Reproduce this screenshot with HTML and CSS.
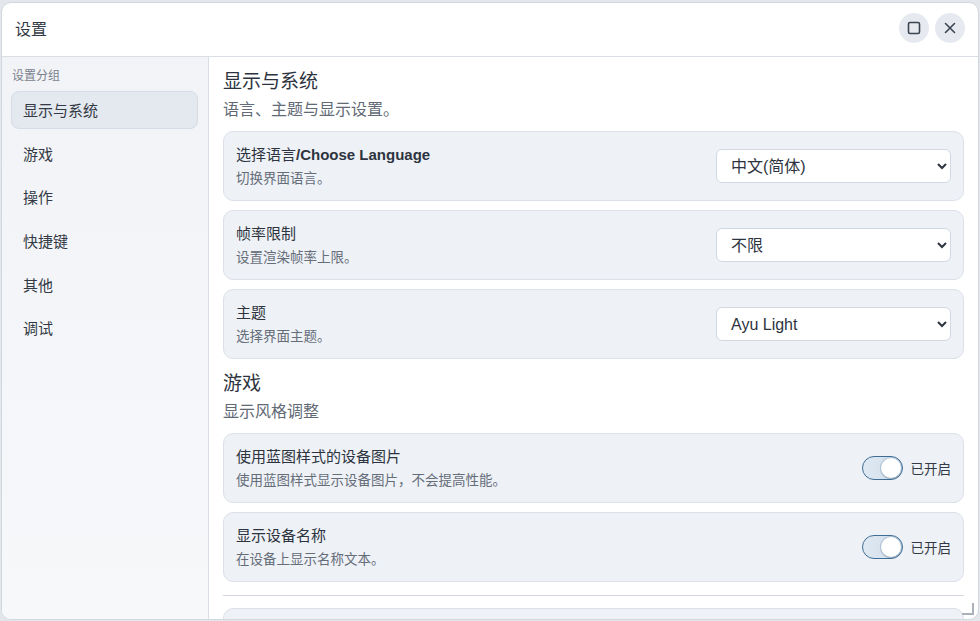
FILE: index.html
```html
<!DOCTYPE html>
<html lang="zh-CN">
<head>
    <meta charset="UTF-8">
    <title>设置</title>
    <link rel="stylesheet" href="styles.css">
</head>
<body>
    <div class="dialog">
        <header class="dialog-header">
            <h1 class="dialog-title">设置</h1>
            <div class="header-actions">
                <button class="round-btn" title="最大化">
                    <svg width="16" height="16" viewBox="0 0 16 16"><rect x="2.5" y="2.5" width="11" height="11" rx="1.5" fill="none" stroke="#3c4452" stroke-width="1.6"/></svg>
                </button>
                <button class="round-btn" title="关闭">
                    <svg width="16" height="16" viewBox="0 0 16 16"><path d="M3.5 3.5l9 9M12.5 3.5l-9 9" stroke="#3c4452" stroke-width="1.6" stroke-linecap="round"/></svg>
                </button>
            </div>
        </header>

        <div class="dialog-body">
            <aside class="sidebar">
                <div class="sidebar-label">设置分组</div>
                <ul class="nav-list">
                    <li class="nav-item active">显示与系统</li>
                    <li class="nav-item">游戏</li>
                    <li class="nav-item">操作</li>
                    <li class="nav-item">快捷键</li>
                    <li class="nav-item">其他</li>
                    <li class="nav-item">调试</li>
                </ul>
            </aside>

            <main class="content">
                <section class="group">
                    <h2 class="group-title">显示与系统</h2>
                    <p class="group-desc">语言、主题与显示设置。</p>

                    <div class="setting-card">
                        <div class="setting-text">
                            <div class="setting-name">选择语言<b>/Choose Language</b></div>
                            <div class="setting-hint">切换界面语言。</div>
                        </div>
                        <select class="setting-select">
                            <option>中文(简体)</option>
                            <option>English</option>
                        </select>
                    </div>

                    <div class="setting-card">
                        <div class="setting-text">
                            <div class="setting-name">帧率限制</div>
                            <div class="setting-hint">设置渲染帧率上限。</div>
                        </div>
                        <select class="setting-select">
                            <option>不限</option>
                            <option>60</option>
                        </select>
                    </div>

                    <div class="setting-card">
                        <div class="setting-text">
                            <div class="setting-name">主题</div>
                            <div class="setting-hint">选择界面主题。</div>
                        </div>
                        <select class="setting-select">
                            <option>Ayu Light</option>
                            <option>Ayu Dark</option>
                        </select>
                    </div>
                </section>

                <section class="group">
                    <h2 class="group-title">游戏</h2>
                    <p class="group-desc">显示风格调整</p>

                    <div class="setting-card">
                        <div class="setting-text">
                            <div class="setting-name">使用蓝图样式的设备图片</div>
                            <div class="setting-hint">使用蓝图样式显示设备图片，不会提高性能。</div>
                        </div>
                        <label class="toggle">
                            <span class="toggle-track on"><span class="toggle-knob"></span></span>
                            <span class="toggle-label">已开启</span>
                        </label>
                    </div>

                    <div class="setting-card">
                        <div class="setting-text">
                            <div class="setting-name">显示设备名称</div>
                            <div class="setting-hint">在设备上显示名称文本。</div>
                        </div>
                        <label class="toggle">
                            <span class="toggle-track on"><span class="toggle-knob"></span></span>
                            <span class="toggle-label">已开启</span>
                        </label>
                    </div>
                </section>

                <hr class="divider">

                <div class="setting-card">
                    <div class="setting-text">
                        <div class="setting-name">&nbsp;</div>
                        <div class="setting-hint">&nbsp;</div>
                    </div>
                </div>
            </main>
        </div>
        <span class="resize-grip"></span>
    </div>
</body>
</html>
```

FILE: styles.css
```css
/* Ventana de ajustes */
html, body { height: 100%; }
body { margin: 0; background-color: #e3e6eb; font-family: "Liberation Sans", "Noto Sans CJK SC", sans-serif; color: #2d3440; overflow: hidden; }
.dialog { position: relative; box-sizing: border-box; height: calc(100vh - 3px); margin: 2px 1px 1px 1px; background-color: #fff; border: 1px solid #d3d8e0; border-radius: 10px; display: flex; flex-direction: column; overflow: hidden; }

.dialog-header { height: 54px; box-sizing: border-box; flex-shrink: 0; display: flex; align-items: center; justify-content: space-between; padding: 0 13px 3px 13px; border-bottom: 1px solid #d9dde4; }
.dialog-title { margin: 0; font-size: 16px; font-weight: normal; color: #333a45; }
.header-actions { display: flex; gap: 6px; }
.round-btn { width: 30px; height: 30px; border-radius: 50%; border: none; background-color: #e6e9ef; display: flex; align-items: center; justify-content: center; padding: 0; cursor: pointer; }

.dialog-body { flex-grow: 1; display: flex; overflow: hidden; }

.sidebar { width: 207px; flex-shrink: 0; box-sizing: border-box; padding: 12px 10px 0 9px; border-right: 1px solid #d9dde4; background: linear-gradient(180deg, #f1f3f7 0%, #f7f8fa 100%); }
.sidebar-label { font-size: 12px; line-height: 14px; color: #7a818c; margin-bottom: 8px; padding-left: 1px; }
.nav-list { list-style: none; margin: 0; padding: 0; display: flex; flex-direction: column; gap: 6px; }
.nav-item { height: 37.6px; box-sizing: border-box; display: flex; align-items: center; padding-left: 11px; font-size: 15px; color: #333a45; border: 1px solid transparent; border-radius: 8px; cursor: pointer; }
.nav-item.active { background-color: #e4e8ef; border-color: #d6dce5; }

.content { flex-grow: 1; padding: 12px 14px 0 14px; overflow: hidden; }
.group-title { margin: 0; font-size: 19px; line-height: 26px; font-weight: normal; color: #2d3440; }
.group-desc { margin: 4px 0 10px 0; font-size: 16px; line-height: 22px; color: #626a76; }
.group + .group { margin-top: 12px; }

.setting-card { box-sizing: border-box; min-height: 70px; display: flex; align-items: center; justify-content: space-between; padding: 0 12px; background-color: #eef1f6; border: 1px solid #dce1e9; border-radius: 10px; margin-bottom: 9px; }
.setting-name { font-size: 15px; line-height: 20px; color: #2d3440; }
.setting-name b { font-weight: bold; }
.setting-hint { font-size: 13.5px; line-height: 19px; margin-top: 4px; color: #656d79; }

.setting-select { width: 235px; height: 34px; box-sizing: border-box; padding: 0 8px 0 10px; font-family: inherit; font-size: 16px; color: #2d3440; background-color: #fff; border: 1px solid #d2d8e1; border-radius: 6px; }

.toggle { display: flex; align-items: center; gap: 8px; cursor: pointer; }
.toggle-track { width: 41px; height: 24px; box-sizing: border-box; border-radius: 12px; border: 1px solid #9aa6b4; background-color: #e8ecf1; display: flex; align-items: center; padding: 1px; }
.toggle-track.on { border-color: #3e6e96; background: linear-gradient(90deg, #e0e9f2 0%, #cddceb 100%); justify-content: flex-end; }
.toggle-knob { width: 20px; height: 20px; border-radius: 50%; background-color: #fff; box-shadow: 0 0 0 1px rgba(90,130,170,0.25), 0 1px 2px rgba(0,0,0,0.2); }
.toggle-label { font-size: 13.5px; color: #333a45; }

.divider { border: none; border-top: 1px solid #d4d9e0; margin: 13px 0 12px 0; }

.resize-grip { position: absolute; right: 4px; bottom: 4px; width: 10px; height: 10px; border-right: 2px solid #aab1bb; border-bottom: 2px solid #aab1bb; }
```
